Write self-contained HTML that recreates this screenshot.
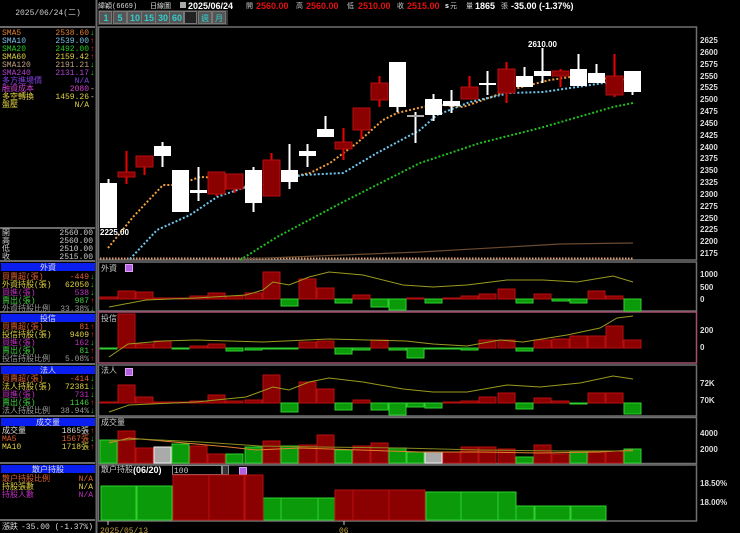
<!DOCTYPE html>
<html><head><meta charset="utf-8"><style>
html,body{margin:0;padding:0;background:#000;width:740px;height:533px;overflow:hidden}
svg{display:block}
text{font-family:"Liberation Mono","Noto Sans CJK TC",monospace;font-size:8px}
.b{font-family:"Liberation Sans","Noto Sans CJK TC",sans-serif;font-weight:bold;font-size:9px}
.ax{font-family:"Liberation Sans",sans-serif;font-weight:bold;font-size:8px;fill:#ddd}
.r{text-anchor:end}
.R{fill:#8b0000;stroke:#b81010;stroke-width:1}
.G{fill:#0a9a0a;stroke:#30d030;stroke-width:1}
.Y{fill:#aaa;stroke:#eee;stroke-width:1}
.W{fill:#fff}
.wr{stroke:#e00;stroke-width:2}
.ww{stroke:#fff;stroke-width:2}
</style></head><body>
<svg width="740" height="533" viewBox="0 0 740 533" xmlns="http://www.w3.org/2000/svg">
<rect width="740" height="533" fill="#000"/>
<g stroke="#6a6a6a" stroke-width="2">
<line x1="0" y1="27" x2="95" y2="27"/><line x1="0" y1="228" x2="95" y2="228"/>
<line x1="0" y1="261" x2="95" y2="261"/><line x1="0" y1="312" x2="95" y2="312"/>
<line x1="0" y1="364" x2="95" y2="364"/><line x1="0" y1="416" x2="95" y2="416"/>
<line x1="0" y1="463" x2="95" y2="463"/><line x1="0" y1="520" x2="95" y2="520"/>
<line x1="96.5" y1="0" x2="96.5" y2="533"/>
</g>
<text x="48" y="15" fill="#ccc" text-anchor="middle">2025/06/24(二)</text>
<g>
<text x="2" y="35" fill="#e08030">SMA5</text><text x="89" y="35" class="r" fill="#e08030">2538.60</text><text x="90" y="35" fill="#2c2">↓</text>
<text x="2" y="43" fill="#7ac0e8">SMA10</text><text x="89" y="43" class="r" fill="#7ac0e8">2539.00</text><text x="90" y="43" fill="#e22">↑</text>
<text x="2" y="51" fill="#2c2">SMA20</text><text x="89" y="51" class="r" fill="#2c2">2492.00</text><text x="90" y="51" fill="#e22">↑</text>
<text x="2" y="59" fill="#e0d040">SMA60</text><text x="89" y="59" class="r" fill="#e0d040">2159.42</text><text x="90" y="59" fill="#e22">↑</text>
<text x="2" y="67" fill="#c0a080">SMA120</text><text x="89" y="67" class="r" fill="#c0a080">2191.21</text><text x="90" y="67" fill="#2c2">↓</text>
<text x="2" y="75" fill="#b040d0">SMA240</text><text x="89" y="75" class="r" fill="#b040d0">2131.17</text><text x="90" y="75" fill="#2c2">↓</text>
<text x="2" y="83" fill="#8040e0">多方進場價</text><text x="89" y="83" class="r" fill="#8040e0">N/A</text>
<text x="2" y="91" fill="#d040d0">融資成本</text><text x="89" y="91" class="r" fill="#d040d0">2080</text><text x="90" y="91" fill="#ccc">-</text>
<text x="2" y="99" fill="#e0d040">多空轉換</text><text x="89" y="99" class="r" fill="#e0d040">1459.26</text><text x="90" y="99" fill="#ccc">-</text>
<text x="2" y="107" fill="#e0d040">盤壓</text><text x="89" y="107" class="r" fill="#e0d040">N/A</text>
</g>
<g fill="#ccc">
<text x="2" y="235">開</text><text x="93" y="235" class="r">2560.00</text>
<text x="2" y="243">高</text><text x="93" y="243" class="r">2560.00</text>
<text x="2" y="251">低</text><text x="93" y="251" class="r">2510.00</text>
<text x="2" y="259">收</text><text x="93" y="259" class="r">2515.00</text>
</g>
<g fill="#0a1ef0">
<rect x="1" y="263" width="94" height="8"/><rect x="1" y="314" width="94" height="8"/>
<rect x="1" y="366" width="94" height="8"/><rect x="1" y="418" width="94" height="8"/>
<rect x="1" y="465" width="94" height="8"/>
</g>
<g fill="#ddd" text-anchor="middle">
<text x="48" y="270">外資</text><text x="48" y="321">投信</text><text x="48" y="373">法人</text><text x="48" y="425">成交量</text><text x="48" y="472">散户持股</text>
</g>
<g>
<text x="2" y="279" fill="#e06030">買賣超(張)</text><text x="89" y="279" class="r" fill="#e06030">-449</text><text x="90" y="279" fill="#2c2">↓</text>
<text x="2" y="287" fill="#e0d040">外資持股(張)</text><text x="89" y="287" class="r" fill="#e0d040">62050</text><text x="90" y="287" fill="#2c2">↓</text>
<text x="2" y="295" fill="#c030c0">買進(張)</text><text x="89" y="295" class="r" fill="#c030c0">538</text><text x="90" y="295" fill="#2c2">↓</text>
<text x="2" y="303" fill="#40d040">賣出(張)</text><text x="89" y="303" class="r" fill="#40d040">987</text><text x="90" y="303" fill="#e22">↑</text>
<text x="2" y="311" fill="#999">外資持股比例</text><text x="89" y="311" class="r" fill="#999">33.38%</text><text x="90" y="311" fill="#2c2">↓</text>
<text x="2" y="329" fill="#e06030">買賣超(張)</text><text x="89" y="329" class="r" fill="#e06030">81</text><text x="90" y="329" fill="#e22">↑</text>
<text x="2" y="337" fill="#e0d040">投信持股(張)</text><text x="89" y="337" class="r" fill="#e0d040">9409</text><text x="90" y="337" fill="#e22">↑</text>
<text x="2" y="345" fill="#c030c0">買進(張)</text><text x="89" y="345" class="r" fill="#c030c0">162</text><text x="90" y="345" fill="#2c2">↓</text>
<text x="2" y="353" fill="#40d040">賣出(張)</text><text x="89" y="353" class="r" fill="#40d040">81</text><text x="90" y="353" fill="#e22">↑</text>
<text x="2" y="361" fill="#999">投信持股比例</text><text x="89" y="361" class="r" fill="#999">5.08%</text><text x="90" y="361" fill="#e22">↑</text>
<text x="2" y="381" fill="#e06030">買賣超(張)</text><text x="89" y="381" class="r" fill="#e06030">-414</text><text x="90" y="381" fill="#2c2">↓</text>
<text x="2" y="389" fill="#e0d040">法人持股(張)</text><text x="89" y="389" class="r" fill="#e0d040">72381</text><text x="90" y="389" fill="#2c2">↓</text>
<text x="2" y="397" fill="#c030c0">買進(張)</text><text x="89" y="397" class="r" fill="#c030c0">731</text><text x="90" y="397" fill="#2c2">↓</text>
<text x="2" y="405" fill="#40d040">賣出(張)</text><text x="89" y="405" class="r" fill="#40d040">1146</text><text x="90" y="405" fill="#e22">↑</text>
<text x="2" y="413" fill="#999">法人持股比例</text><text x="89" y="413" class="r" fill="#999">38.94%</text><text x="90" y="413" fill="#2c2">↓</text>
<text x="2" y="433" fill="#ddd">成交量</text><text x="89" y="433" class="r" fill="#ddd">1865張</text><text x="90" y="433" fill="#e22">↑</text>
<text x="2" y="441" fill="#e06030">MA5</text><text x="89" y="441" class="r" fill="#e06030">1567張</text><text x="90" y="441" fill="#2c2">↓</text>
<text x="2" y="449" fill="#e0d040">MA10</text><text x="89" y="449" class="r" fill="#e0d040">1718張</text><text x="90" y="449" fill="#e22">↑</text>
<text x="2" y="481" fill="#e06030">散户持股比例</text><text x="93" y="481" class="r" fill="#e06030">N/A</text>
<text x="2" y="489" fill="#e0d040">持股張數</text><text x="93" y="489" class="r" fill="#e0d040">N/A</text>
<text x="2" y="497" fill="#c030c0">持股人數</text><text x="93" y="497" class="r" fill="#c030c0">N/A</text>
<text x="2" y="529" fill="#ddd">漲跌</text><text x="93" y="529" class="r" fill="#ddd">-35.00 (-1.37%)</text>
</g>
<!-- header -->
<text x="98" y="8" fill="#ddd" style="font-size:7px">緯穎(6669)</text>
<text x="150" y="8" fill="#ddd" style="font-size:7px">日線圖</text>
<rect x="180" y="2" width="6" height="6" fill="#aaa"/>
<text x="188" y="9" class="b" fill="#fff">2025/06/24</text>
<text x="246" y="8" fill="#ccc" style="font-size:7px">開</text><text x="256" y="9" class="b" fill="#e01010">2560.00</text>
<text x="296" y="8" fill="#ccc" style="font-size:7px">高</text><text x="306" y="9" class="b" fill="#e01010">2560.00</text>
<text x="347" y="8" fill="#ccc" style="font-size:7px">低</text><text x="358" y="9" class="b" fill="#e01010">2510.00</text>
<text x="397" y="8" fill="#ccc" style="font-size:7px">收</text><text x="407" y="9" class="b" fill="#e01010">2515.00</text>
<text x="445" y="8" fill="#fff" class="b" style="font-size:7px">s</text><text x="450" y="8" fill="#ccc" style="font-size:7px">元</text>
<text x="466" y="8" fill="#ccc" style="font-size:7px">量</text><text x="475" y="9" class="b" fill="#fff">1865</text>
<text x="501" y="8" fill="#ccc" style="font-size:7px">張</text><text x="511" y="9" class="b" fill="#fff">-35.00 (-1.37%)</text>
<!-- buttons -->
<rect x="98" y="10" width="130" height="15" fill="#3a3a3a"/>
<g fill="#555" stroke="#777" stroke-width="1">
<rect x="99.5" y="11.5" width="12" height="12"/><rect x="113.5" y="11.5" width="13" height="12"/><rect x="127.5" y="11.5" width="14" height="12"/><rect x="141.5" y="11.5" width="14" height="12"/><rect x="155.5" y="11.5" width="14" height="12"/><rect x="169.5" y="11.5" width="14" height="12"/><rect x="184.5" y="11.5" width="12" height="12" fill="#222"/><rect x="198.5" y="11.5" width="13" height="12"/><rect x="212.5" y="11.5" width="13" height="12"/>
</g>
<g fill="#3cc" text-anchor="middle">
<text x="106" y="21" class="b">1</text><text x="120" y="21" class="b">5</text><text x="135" y="21" class="b">10</text><text x="149" y="21" class="b">15</text><text x="163" y="21" class="b">30</text><text x="177" y="21" class="b">60</text>
</g>
<text x="201" y="21" fill="#3cc">週</text><text x="215" y="21" fill="#3cc">月</text>
<!-- panel frames -->
<g fill="none" stroke="#707070" stroke-width="1.5">
<rect x="98.5" y="27" width="598" height="233"/>
<rect x="98.5" y="262" width="598" height="49"/>
<rect x="98.5" y="365" width="598" height="51"/>
<rect x="98.5" y="417.5" width="598" height="46"/>
<rect x="98.5" y="465" width="598" height="56"/>
</g>
<rect x="98.5" y="312" width="598" height="51" fill="none" stroke="#a05070" stroke-width="1.5"/>
<!-- right axis -->
<g class="ax">
<text x="700" y="43" class="ax">2625</text><text x="700" y="55" class="ax">2600</text><text x="700" y="67" class="ax">2575</text><text x="700" y="79" class="ax">2550</text><text x="700" y="90" class="ax">2525</text><text x="700" y="102" class="ax">2500</text><text x="700" y="114" class="ax">2475</text><text x="700" y="126" class="ax">2450</text><text x="700" y="138" class="ax">2425</text><text x="700" y="150" class="ax">2400</text><text x="700" y="161" class="ax">2375</text><text x="700" y="173" class="ax">2350</text><text x="700" y="185" class="ax">2325</text><text x="700" y="197" class="ax">2300</text><text x="700" y="209" class="ax">2275</text><text x="700" y="221" class="ax">2250</text><text x="700" y="232" class="ax">2225</text><text x="700" y="244" class="ax">2200</text><text x="700" y="256" class="ax">2175</text>
<text x="700" y="277" class="ax">1000</text><text x="700" y="290" class="ax">500</text><text x="700" y="302" class="ax">0</text>
<text x="700" y="333" class="ax">200</text><text x="700" y="350" class="ax">0</text>
<text x="700" y="386" class="ax">72K</text><text x="700" y="403" class="ax">70K</text>
<text x="700" y="436" class="ax">4000</text><text x="700" y="452" class="ax">2000</text>
<text x="700" y="486" class="ax">18.50%</text><text x="700" y="505" class="ax">18.00%</text>
</g>
<!-- main chart lines -->
<line x1="100" y1="258.5" x2="634" y2="258.5" stroke="#e8a070" stroke-width="2" stroke-dasharray="1.5 1.5"/>
<polyline points="240,259 420,252 560,244 633,243" fill="none" stroke="#6a4a30" stroke-width="1.2"/>
<polyline points="108,248 133,217 163,185 177,185 200,177 223,178 243,185 253,190 270,182 290,177 310,173 330,163 357,143 383,120 397,113 423,107 443,105 463,107 483,100 510,90 530,85 550,80 570,77 590,80 610,78 633,80" fill="none" stroke="#f0a040" stroke-width="2" stroke-dasharray="2 2"/>
<polyline points="130,259 157,230 190,215 217,197 243,188 277,180 303,175 343,173 377,153 420,130 437,115 470,102 510,93 543,92 577,87 610,82 633,80" fill="none" stroke="#70c8f0" stroke-width="2" stroke-dasharray="2 2"/>
<polyline points="240,260 277,237 343,202 420,163 480,143 540,128 613,107 633,103" fill="none" stroke="#20c020" stroke-width="2" stroke-dasharray="2 2"/>
<!-- candles -->
<line x1="108.5" y1="179" x2="108.5" y2="228" class="ww"/><rect x="100" y="183" width="17" height="45" class="W"/>
<line x1="126.5" y1="151" x2="126.5" y2="184" class="wr"/><rect x="118" y="172" width="17" height="5" class="R"/>
<line x1="144.5" y1="156" x2="144.5" y2="175" class="wr"/><rect x="136" y="156" width="17" height="11" class="R"/>
<line x1="162.5" y1="142" x2="162.5" y2="167" class="ww"/><rect x="154" y="146" width="17" height="10" class="W"/>
<line x1="180.5" y1="170" x2="180.5" y2="212" class="ww"/><rect x="172" y="170" width="17" height="42" class="W"/>
<line x1="198.5" y1="167" x2="198.5" y2="201" class="ww"/><rect x="190" y="190" width="17" height="3" class="W"/>
<line x1="216.5" y1="172" x2="216.5" y2="196" class="wr"/><rect x="208" y="172" width="17" height="22" class="R"/>
<line x1="234.5" y1="174" x2="234.5" y2="193" class="wr"/><rect x="226" y="174" width="17" height="15" class="R"/>
<line x1="253.5" y1="167" x2="253.5" y2="212" class="ww"/><rect x="245" y="170" width="17" height="33" class="W"/>
<line x1="271.5" y1="153" x2="271.5" y2="196" class="wr"/><rect x="263" y="160" width="17" height="36" class="R"/>
<line x1="289.5" y1="144" x2="289.5" y2="189" class="ww"/><rect x="281" y="170" width="17" height="12" class="W"/>
<line x1="307.5" y1="144" x2="307.5" y2="167" class="ww"/><rect x="299" y="151" width="17" height="5" class="W"/>
<line x1="325.5" y1="116" x2="325.5" y2="137" class="ww"/><rect x="317" y="129" width="17" height="8" class="W"/>
<line x1="343.5" y1="128" x2="343.5" y2="160" class="wr"/><rect x="335" y="142" width="17" height="7" class="R"/>
<line x1="361.5" y1="108" x2="361.5" y2="139" class="wr"/><rect x="353" y="108" width="17" height="22" class="R"/>
<line x1="379.5" y1="76" x2="379.5" y2="107" class="wr"/><rect x="371" y="83" width="17" height="17" class="R"/>
<line x1="397.5" y1="62" x2="397.5" y2="112" class="ww"/><rect x="389" y="62" width="17" height="45" class="W"/>
<line x1="415.5" y1="112" x2="415.5" y2="143" class="ww"/><rect x="407" y="115" width="17" height="2" fill="#aaa"/>
<line x1="433.5" y1="94" x2="433.5" y2="121" class="ww"/><rect x="425" y="99" width="17" height="16" class="W"/>
<line x1="451.5" y1="90" x2="451.5" y2="113" class="ww"/><rect x="443" y="101" width="17" height="5" class="W"/>
<line x1="469.5" y1="76" x2="469.5" y2="99" class="wr"/><rect x="461" y="87" width="17" height="12" class="R"/>
<line x1="487.5" y1="71" x2="487.5" y2="95" class="ww"/><rect x="479" y="83" width="17" height="2" class="W"/>
<line x1="506.5" y1="62" x2="506.5" y2="103" class="wr"/><rect x="498" y="69" width="17" height="24" class="R"/>
<line x1="524.5" y1="67" x2="524.5" y2="87" class="ww"/><rect x="516" y="76" width="17" height="11" class="W"/>
<line x1="542.5" y1="48" x2="542.5" y2="83" class="ww"/><rect x="534" y="71" width="17" height="5" class="W"/>
<line x1="560.5" y1="69" x2="560.5" y2="87" class="wr"/><rect x="552" y="71" width="17" height="5" class="R"/>
<line x1="578.5" y1="54" x2="578.5" y2="86" class="ww"/><rect x="570" y="69" width="17" height="17" class="W"/>
<line x1="596.5" y1="64" x2="596.5" y2="83" class="ww"/><rect x="588" y="73" width="17" height="10" class="W"/>
<line x1="614.5" y1="54" x2="614.5" y2="97" class="wr"/><rect x="606" y="76" width="17" height="19" class="R"/>
<line x1="632.5" y1="71" x2="632.5" y2="95" class="ww"/><rect x="624" y="71" width="17" height="21" class="W"/>
<text x="528" y="47" class="b" fill="#fff" style="font-size:8px">2610.00</text>
<text x="100" y="235" class="b" fill="#fff" style="font-size:8px">2225.00</text>
<!-- sub panel labels -->
<text x="101" y="271" fill="#ccc">外資</text><text x="101" y="321" fill="#ccc">投信</text><text x="101" y="373" fill="#ccc">法人</text><text x="101" y="425" fill="#ccc">成交量</text>
<text x="101" y="472" fill="#ccc">散户持股</text><text x="133" y="473" class="b" fill="#fff">(06/20)</text>
<g fill="#b060e0" stroke="#e0a0ff" stroke-width="1"><rect x="125.5" y="264.5" width="7" height="7"/><rect x="125.5" y="314.5" width="7" height="7"/><rect x="125.5" y="368.5" width="7" height="7"/><rect x="239.5" y="467.5" width="7" height="7"/></g>
<rect x="172.5" y="465.5" width="49" height="9" fill="#000" stroke="#888"/><text x="174" y="473" fill="#ccc">100</text>
<rect x="222.5" y="465.5" width="6" height="9" fill="#333" stroke="#888"/>
<!-- 外資 -->
<g class="R">
<rect x="100" y="297" width="17" height="2"/><rect x="118" y="291" width="17" height="8"/><rect x="136" y="292" width="17" height="7"/><rect x="154" y="298" width="17" height="1"/><rect x="172" y="298" width="17" height="1"/><rect x="190" y="296" width="17" height="3"/><rect x="208" y="293" width="17" height="6"/><rect x="226" y="296" width="17" height="3"/><rect x="245" y="293" width="17" height="6"/><rect x="263" y="272" width="17" height="27"/><rect x="299" y="279" width="17" height="20"/><rect x="317" y="288" width="17" height="11"/><rect x="353" y="295" width="17" height="4"/><rect x="407" y="298" width="17" height="1"/><rect x="443" y="298" width="17" height="1"/><rect x="461" y="296" width="17" height="3"/><rect x="479" y="294" width="17" height="5"/><rect x="498" y="289" width="17" height="10"/><rect x="534" y="294" width="17" height="5"/><rect x="588" y="291" width="17" height="8"/><rect x="606" y="296" width="17" height="3"/>
</g>
<g class="G">
<rect x="281" y="299" width="17" height="7"/><rect x="335" y="299" width="17" height="4"/><rect x="371" y="299" width="17" height="8"/><rect x="389" y="299" width="17" height="11"/><rect x="425" y="299" width="17" height="4"/><rect x="516" y="299" width="17" height="4"/><rect x="552" y="299" width="17" height="2"/><rect x="570" y="299" width="17" height="4"/><rect x="624" y="299" width="17" height="12"/>
</g>
<polyline points="109,307 146,300 196,298 246,295 263,290 273,282 289,285 309,277 329,272 363,275 403,285 433,287 467,285 507,280 543,280 577,282 613,276 633,282" fill="none" stroke="#9a9a20" stroke-width="1"/>
<!-- 投信 -->
<g class="R">
<rect x="118" y="314" width="17" height="34"/><rect x="136" y="344" width="17" height="4"/><rect x="154" y="341" width="17" height="7"/><rect x="190" y="346" width="17" height="2"/><rect x="208" y="344" width="17" height="4"/><rect x="299" y="342" width="17" height="6"/><rect x="317" y="341" width="17" height="7"/><rect x="371" y="340" width="17" height="8"/><rect x="479" y="340" width="17" height="8"/><rect x="498" y="340" width="17" height="8"/><rect x="534" y="340" width="17" height="8"/><rect x="552" y="339" width="17" height="9"/><rect x="570" y="336" width="17" height="12"/><rect x="588" y="336" width="17" height="12"/><rect x="606" y="326" width="17" height="22"/><rect x="624" y="340" width="17" height="8"/>
</g>
<g class="G">
<rect x="100" y="348" width="17" height="1"/><rect x="172" y="348" width="17" height="1"/><rect x="226" y="348" width="17" height="3"/><rect x="245" y="348" width="17" height="2"/><rect x="263" y="348" width="17" height="1"/><rect x="281" y="348" width="17" height="1"/><rect x="335" y="348" width="17" height="6"/><rect x="353" y="348" width="17" height="2"/><rect x="389" y="348" width="17" height="2"/><rect x="407" y="348" width="17" height="10"/><rect x="425" y="348" width="17" height="1"/><rect x="443" y="348" width="17" height="1"/><rect x="461" y="348" width="17" height="2"/><rect x="516" y="348" width="17" height="3"/>
</g>
<polyline points="109,357 128,344 163,341 196,340 263,342 329,339 406,341 433,344 467,346 500,340 523,342 567,335 600,328 617,318 633,316" fill="none" stroke="#9a9a20" stroke-width="1"/>
<!-- 法人 -->
<g class="R">
<rect x="100" y="402" width="17" height="1"/><rect x="118" y="385" width="17" height="18"/><rect x="136" y="397" width="17" height="6"/><rect x="154" y="402" width="17" height="1"/><rect x="172" y="402" width="17" height="1"/><rect x="190" y="401" width="17" height="2"/><rect x="208" y="395" width="17" height="8"/><rect x="226" y="401" width="17" height="2"/><rect x="245" y="400" width="17" height="3"/><rect x="263" y="375" width="17" height="28"/><rect x="299" y="382" width="17" height="21"/><rect x="317" y="389" width="17" height="14"/><rect x="353" y="400" width="17" height="3"/><rect x="443" y="402" width="17" height="1"/><rect x="461" y="401" width="17" height="2"/><rect x="479" y="397" width="17" height="6"/><rect x="498" y="393" width="17" height="10"/><rect x="534" y="398" width="17" height="5"/><rect x="552" y="401" width="17" height="2"/><rect x="588" y="393" width="17" height="10"/><rect x="606" y="393" width="17" height="10"/>
</g>
<g class="G">
<rect x="281" y="403" width="17" height="9"/><rect x="335" y="403" width="17" height="7"/><rect x="371" y="403" width="17" height="7"/><rect x="389" y="403" width="17" height="12"/><rect x="407" y="403" width="17" height="4"/><rect x="425" y="403" width="17" height="5"/><rect x="516" y="403" width="17" height="6"/><rect x="570" y="403" width="17" height="1"/><rect x="624" y="403" width="17" height="11"/>
</g>
<polyline points="109,412 129,405 196,402 246,397 273,387 289,390 309,382 329,378 363,382 403,389 433,392 467,392 507,385 540,387 580,383 613,376 633,379" fill="none" stroke="#9a9a20" stroke-width="1"/>
<!-- volume -->
<g class="G">
<rect x="100" y="440" width="17" height="23"/><rect x="172" y="444" width="17" height="19"/><rect x="226" y="454" width="17" height="9"/><rect x="245" y="447" width="17" height="16"/><rect x="281" y="446" width="17" height="17"/><rect x="335" y="450" width="17" height="13"/><rect x="389" y="448" width="17" height="15"/><rect x="407" y="452" width="17" height="11"/><rect x="516" y="457" width="17" height="6"/><rect x="570" y="451" width="17" height="12"/><rect x="624" y="449" width="17" height="14"/>
</g>
<g class="R">
<rect x="118" y="431" width="17" height="32"/><rect x="136" y="448" width="17" height="15"/><rect x="190" y="446" width="17" height="17"/><rect x="208" y="454" width="17" height="9"/><rect x="263" y="441" width="17" height="22"/><rect x="299" y="445" width="17" height="18"/><rect x="317" y="435" width="17" height="28"/><rect x="353" y="446" width="17" height="17"/><rect x="371" y="443" width="17" height="20"/><rect x="443" y="452" width="17" height="11"/><rect x="461" y="447" width="17" height="16"/><rect x="479" y="447" width="17" height="16"/><rect x="498" y="449" width="17" height="14"/><rect x="534" y="445" width="17" height="18"/><rect x="552" y="454" width="17" height="9"/><rect x="588" y="451" width="17" height="12"/><rect x="606" y="451" width="17" height="12"/>
</g>
<g class="Y"><rect x="154" y="447" width="17" height="16"/><rect x="425" y="452" width="17" height="11"/></g>
<polyline points="109,443 129,438 163,441 229,447 256,450 300,448 360,450 420,452 480,452 540,453 600,452 633,450" fill="none" stroke="#e08030" stroke-width="1"/>
<polyline points="109,441 140,439 200,442 260,446 320,447 400,448 480,450 560,451 633,451" fill="none" stroke="#8a8a20" stroke-width="1"/>
<!-- 散户 -->
<g class="G">
<rect x="101" y="486" width="35" height="34"/><rect x="137" y="486" width="35" height="34"/><rect x="263" y="498" width="18" height="22"/><rect x="281" y="498" width="37" height="22"/><rect x="318" y="498" width="17" height="22"/><rect x="426" y="492" width="35" height="28"/><rect x="461" y="492" width="37" height="28"/><rect x="498" y="492" width="18" height="28"/><rect x="516" y="506" width="18" height="14"/><rect x="535" y="506" width="35" height="14"/><rect x="571" y="506" width="35" height="14"/>
</g>
<g class="R">
<rect x="173" y="475" width="36" height="45"/><rect x="209" y="475" width="35" height="45"/><rect x="245" y="475" width="18" height="45"/><rect x="335" y="490" width="18" height="30"/><rect x="353" y="490" width="36" height="30"/><rect x="389" y="490" width="36" height="30"/>
</g>
<!-- x axis -->
<line x1="108" y1="521" x2="108" y2="525" stroke="#ccc"/><line x1="344" y1="521" x2="344" y2="525" stroke="#ccc"/>
<text x="100" y="533" fill="#c0a040" style="font-size:8px">2025/05/13</text>
<text x="339" y="533" fill="#c0a040" style="font-size:8px">06</text>
</svg>
</body></html>
